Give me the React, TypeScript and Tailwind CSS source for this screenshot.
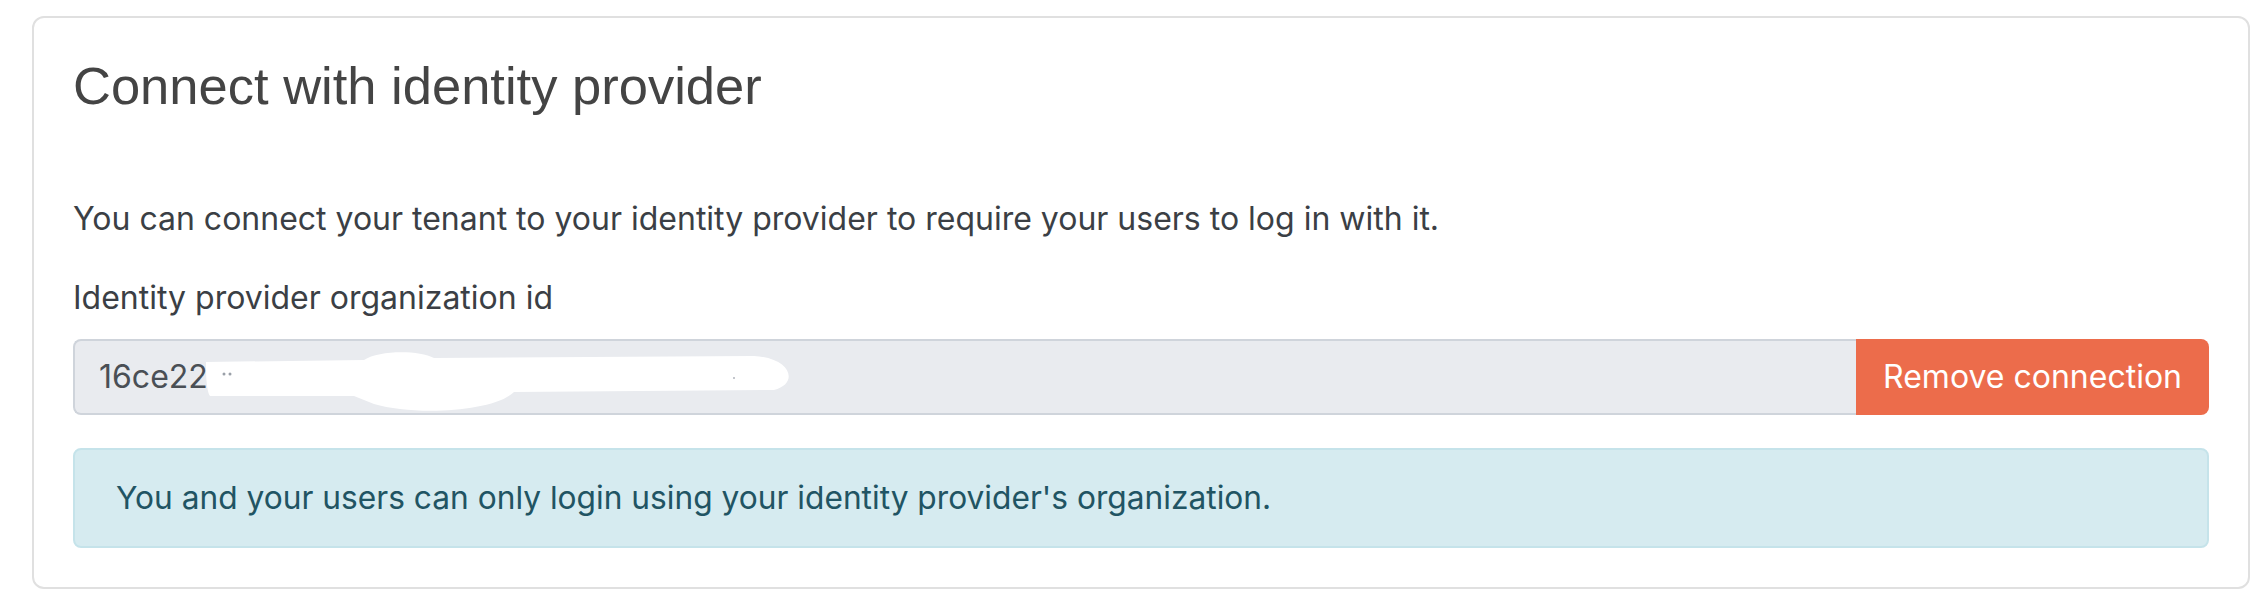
export default function App() {
  return (
    <div className="min-h-[600px] w-[2266px] bg-white pt-[16px] font-['Inter',sans-serif]">
      <div className="ml-[32px] w-[2218px] rounded-[12px] border-2 border-[#e0e0e0] bg-white px-[39px] pb-[39px] pt-[37px]">
        <h3 className="font-['Liberation_Sans',Arial,sans-serif] text-[52.5px] leading-[62px] text-[#444444]">
          Connect with identity provider
        </h3>

        <p className="mt-[78px] text-[32px] leading-[48px] text-[#3b3f45]">
          You can connect your tenant to your identity provider to require your users to log in with it.
        </p>

        <label className="mt-[31px] block text-[32px] leading-[48px] text-[#3b3f45]">
          Identity provider organization id
        </label>

        <div className="mt-[17px] flex h-[76px]">
          <div className="relative flex flex-1 items-center rounded-l-[8px] border-2 border-r-0 border-[#cfd4db] bg-[#e9ebef] px-[24px] text-[32px] text-[#4a4f55]">
            <span>16ce22</span>
            <svg
              className="absolute left-[131px] top-[9px]"
              width="590"
              height="64"
              viewBox="0 0 590 64"
            >
              <path
                d="M0 12 L158 10 C173 0 213 0 228 8 L548 6 C586 8 593 34 568 40 L308 42 C288 62 208 66 168 54 L148 46 L4 46 C0 40 0 20 0 12 Z"
                fill="#ffffff"
              />
              <circle cx="18" cy="24" r="1.5" fill="#9aa0a8" />
              <circle cx="24" cy="24" r="1.5" fill="#9aa0a8" />
              <circle cx="528" cy="28" r="1" fill="#b0b5bc" />
            </svg>
          </div>
          <button className="rounded-r-[8px] bg-[#ec6c4b] px-[27px] text-[32px] text-white">
            Remove connection
          </button>
        </div>

        <div className="mt-[33px] rounded-[8px] border-2 border-[#c5e3ea] bg-[#d6ebf0] px-[41px] py-[24px] text-[31.7px] leading-[48px] text-[#215463]">
          You and your users can only login using your identity provider's organization.
        </div>
      </div>
    </div>
  );
}
